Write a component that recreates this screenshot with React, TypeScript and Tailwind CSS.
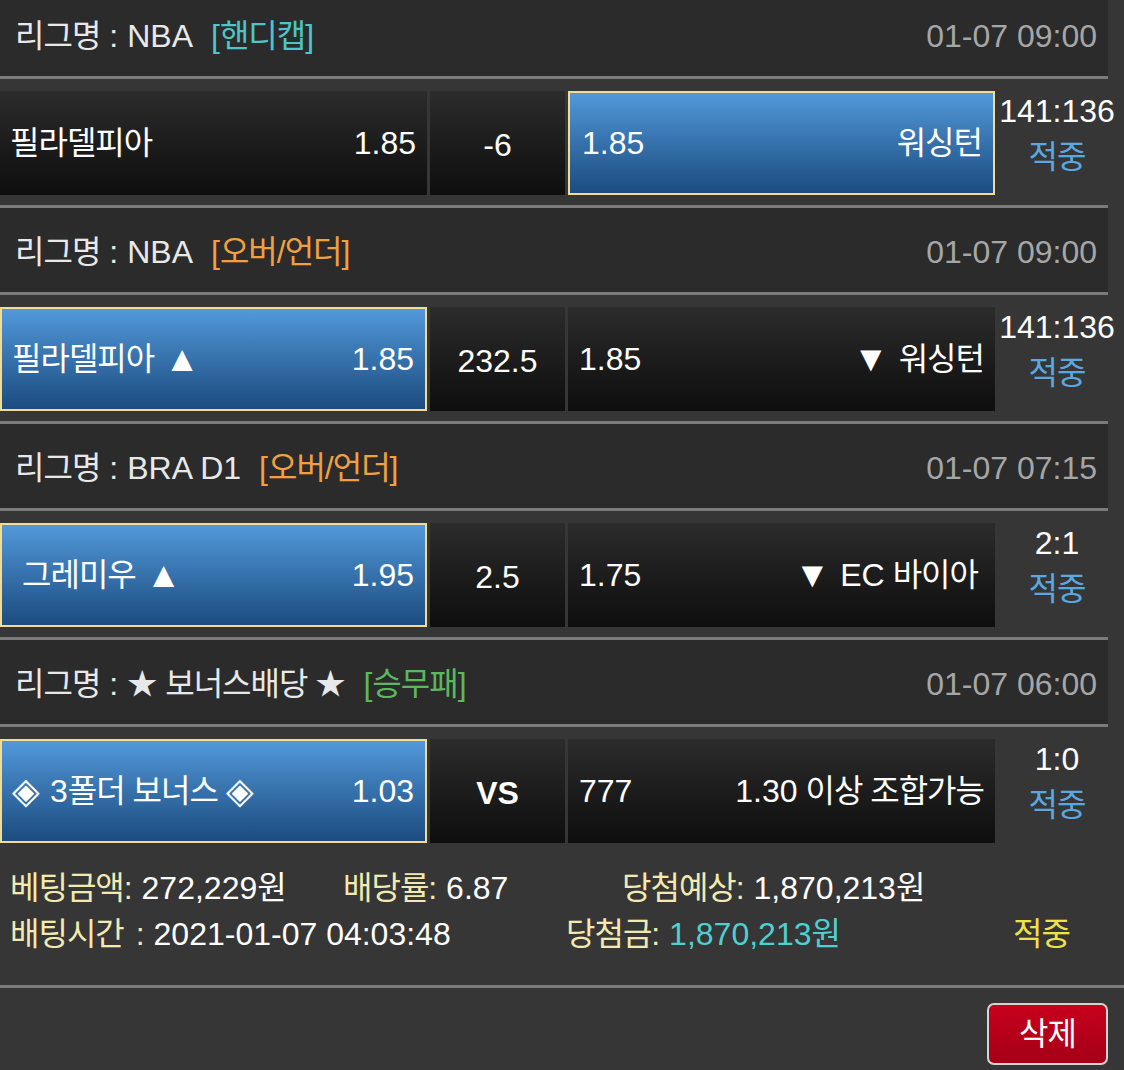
import React from "react";

function Ko({ children, className = "" }: { children: React.ReactNode; className?: string }) {
  return <span className={`text-[32px] tracking-[-1px] ${className}`}>{children}</span>;
}

function LeagueHeader({
  league,
  tag,
  tagColor,
  time,
  first = false,
}: {
  league: React.ReactNode;
  tag: string;
  tagColor: string;
  time: string;
  first?: boolean;
}) {
  return (
    <div className="w-[1108px]">
      <div
        className={`flex h-[84px] items-center justify-between bg-[#2b2b2b] pl-[15px] pr-[11px] ${first ? "-mt-[8px]" : ""}`}
      >
        <div className="flex items-center pt-[4px] text-[#e8e8e8]">
          <Ko>리그명</Ko>
          <span className="ml-[9px]">:</span>
          <span className="ml-[9px] flex items-center">{league}</span>
          <span className={`ml-[18px] ${tagColor}`}>
            [<Ko>{tag}</Ko>]
          </span>
        </div>
        <span className="pt-[4px] text-[#a6a6a6]">{time}</span>
      </div>
      <div className="h-[3px] bg-[#7b7b7b]" />
    </div>
  );
}

const dark = "bg-linear-to-b from-[#2c2c2c] to-[#0e0e0e]";
const blue = "border-2 border-[#f3dc92] bg-linear-to-b from-[#5299da] to-[#1c4c80]";

function BetRow({
  home,
  homeOdds,
  mid,
  awayOdds,
  away,
  pick,
  score,
  last = false,
}: {
  home: React.ReactNode;
  homeOdds: string;
  mid: React.ReactNode;
  awayOdds: string;
  away: React.ReactNode;
  pick: "home" | "away";
  score: string;
  last?: boolean;
}) {
  return (
    <div>
      <div className="flex h-[126px] items-start pt-[12px] pb-[10px]">
        <div
          className={`flex h-[104px] w-[427px] items-center justify-between ${pick === "home" ? `${blue} pl-[10px] pr-[11px]` : `${dark} pl-[10px] pr-[11px]`}`}
        >
          <span className="flex items-center text-white">{home}</span>
          <span className="text-white">{homeOdds}</span>
        </div>
        <div className={`mx-[3px] flex h-[104px] w-[135px] items-center justify-center pt-[4px] text-white ${dark}`}>
          {mid}
        </div>
        <div
          className={`flex h-[104px] w-[427px] items-center justify-between pr-[11px] ${pick === "away" ? `${blue} pl-[12px]` : `${dark} pl-[11px]`}`}
        >
          <span className="text-white">{awayOdds}</span>
          <span className="flex items-center text-white">{away}</span>
        </div>
        <div className="-mt-[3px] flex w-[124px] flex-col items-center leading-[46px]">
          <span className="text-white">{score}</span>
          <Ko className="text-[#5aa8e0]">적중</Ko>
        </div>
      </div>
      {!last && <div className="h-[3px] w-[1108px] bg-[#7b7b7b]" />}
    </div>
  );
}

export default function App() {
  return (
    <div
      className="h-[1070px] w-[1124px] overflow-hidden bg-[#363636] text-[32px] leading-none"
      style={{ fontFamily: '"Liberation Sans", "Noto Sans CJK KR", sans-serif' }}
    >
      <LeagueHeader first league="NBA" tag="핸디캡" tagColor="text-[#4cc6c8]" time="01-07 09:00" />
      <BetRow
        home={<Ko>필라델피아</Ko>}
        homeOdds="1.85"
        mid="-6"
        awayOdds="1.85"
        away={<Ko>워싱턴</Ko>}
        pick="away"
        score="141:136"
      />

      <LeagueHeader league="NBA" tag="오버/언더" tagColor="text-[#f0a040]" time="01-07 09:00" />
      <BetRow
        home={
          <>
            <Ko>필라델피아</Ko>
            <span className="ml-[10px] text-[36px]">▲</span>
          </>
        }
        homeOdds="1.85"
        mid="232.5"
        awayOdds="1.85"
        away={
          <>
            <span className="mr-[10px] text-[36px]">▼</span>
            <Ko>워싱턴</Ko>
          </>
        }
        pick="home"
        score="141:136"
      />

      <LeagueHeader league="BRA D1" tag="오버/언더" tagColor="text-[#f0a040]" time="01-07 07:15" />
      <BetRow
        home={
          <>
            <Ko className="ml-[10px]">그레미우</Ko>
            <span className="ml-[10px] text-[36px]">▲</span>
          </>
        }
        homeOdds="1.95"
        mid="2.5"
        awayOdds="1.75"
        away={
          <>
            <span className="mr-[10px] text-[36px]">▼</span>
            <span>EC</span>
            <Ko className="ml-[8px] mr-[6px]">바이아</Ko>
          </>
        }
        pick="home"
        score="2:1"
      />

      <LeagueHeader
        league={
          <>
            <span className="text-[30px]">★</span>
            <Ko className="ml-[8px]">보너스배당</Ko>
            <span className="ml-[8px] text-[30px]">★</span>
          </>
        }
        tag="승무패"
        tagColor="text-[#5cb85c]"
        time="01-07 06:00"
      />
      <BetRow
        home={
          <>
            <span className="text-[36px]">◈</span>
            <span className="ml-[10px]">3</span>
            <Ko>폴더 보너스</Ko>
            <span className="ml-[8px] text-[36px]">◈</span>
          </>
        }
        homeOdds="1.03"
        mid={<span className="font-bold">VS</span>}
        awayOdds="777"
        away={
          <>
            <span>1.30</span>
            <Ko className="ml-[8px]">이상 조합가능</Ko>
          </>
        }
        pick="home"
        score="1:0"
        last
      />

      <div className="pl-[10px] pt-[12px] pb-[28px] leading-[46px] text-white">
        <div className="flex">
          <div className="w-[333px]">
            <Ko className="text-[#f2eab0]">베팅금액</Ko>
            <span className="text-[#f2eab0]">:</span> 272,229<Ko>원</Ko>
          </div>
          <div className="w-[279px]">
            <Ko className="text-[#f2eab0]">배당률</Ko>
            <span className="text-[#f2eab0]">:</span> 6.87
          </div>
          <div>
            <Ko className="text-[#f2eab0]">당첨예상</Ko>
            <span className="text-[#f2eab0]">:</span> 1,870,213<Ko>원</Ko>
          </div>
        </div>
        <div className="flex">
          <div className="w-[556px]">
            <Ko className="text-[#f2eab0]">배팅시간</Ko>
            <span className="ml-[12px] text-[#f2eab0]">:</span> 2021-01-07 04:03:48
          </div>
          <div className="w-[447px]">
            <Ko className="text-[#f2eab0]">당첨금</Ko>
            <span className="text-[#f2eab0]">:</span>{" "}
            <span className="text-[#4fd0d0]">
              1,870,213<Ko>원</Ko>
            </span>
          </div>
          <Ko className="text-[#f0e34a]">적중</Ko>
        </div>
      </div>
      <div className="h-[3px] bg-[#7b7b7b]" />
      <div className="flex justify-end pt-[15px] pr-[16px]">
        <button className="flex h-[62px] w-[121px] items-center justify-center rounded-[7px] border-2 border-[#d4d4d4] bg-linear-to-b from-[#c8001e] to-[#a30016] text-white">
          <Ko>삭제</Ko>
        </button>
      </div>
    </div>
  );
}
